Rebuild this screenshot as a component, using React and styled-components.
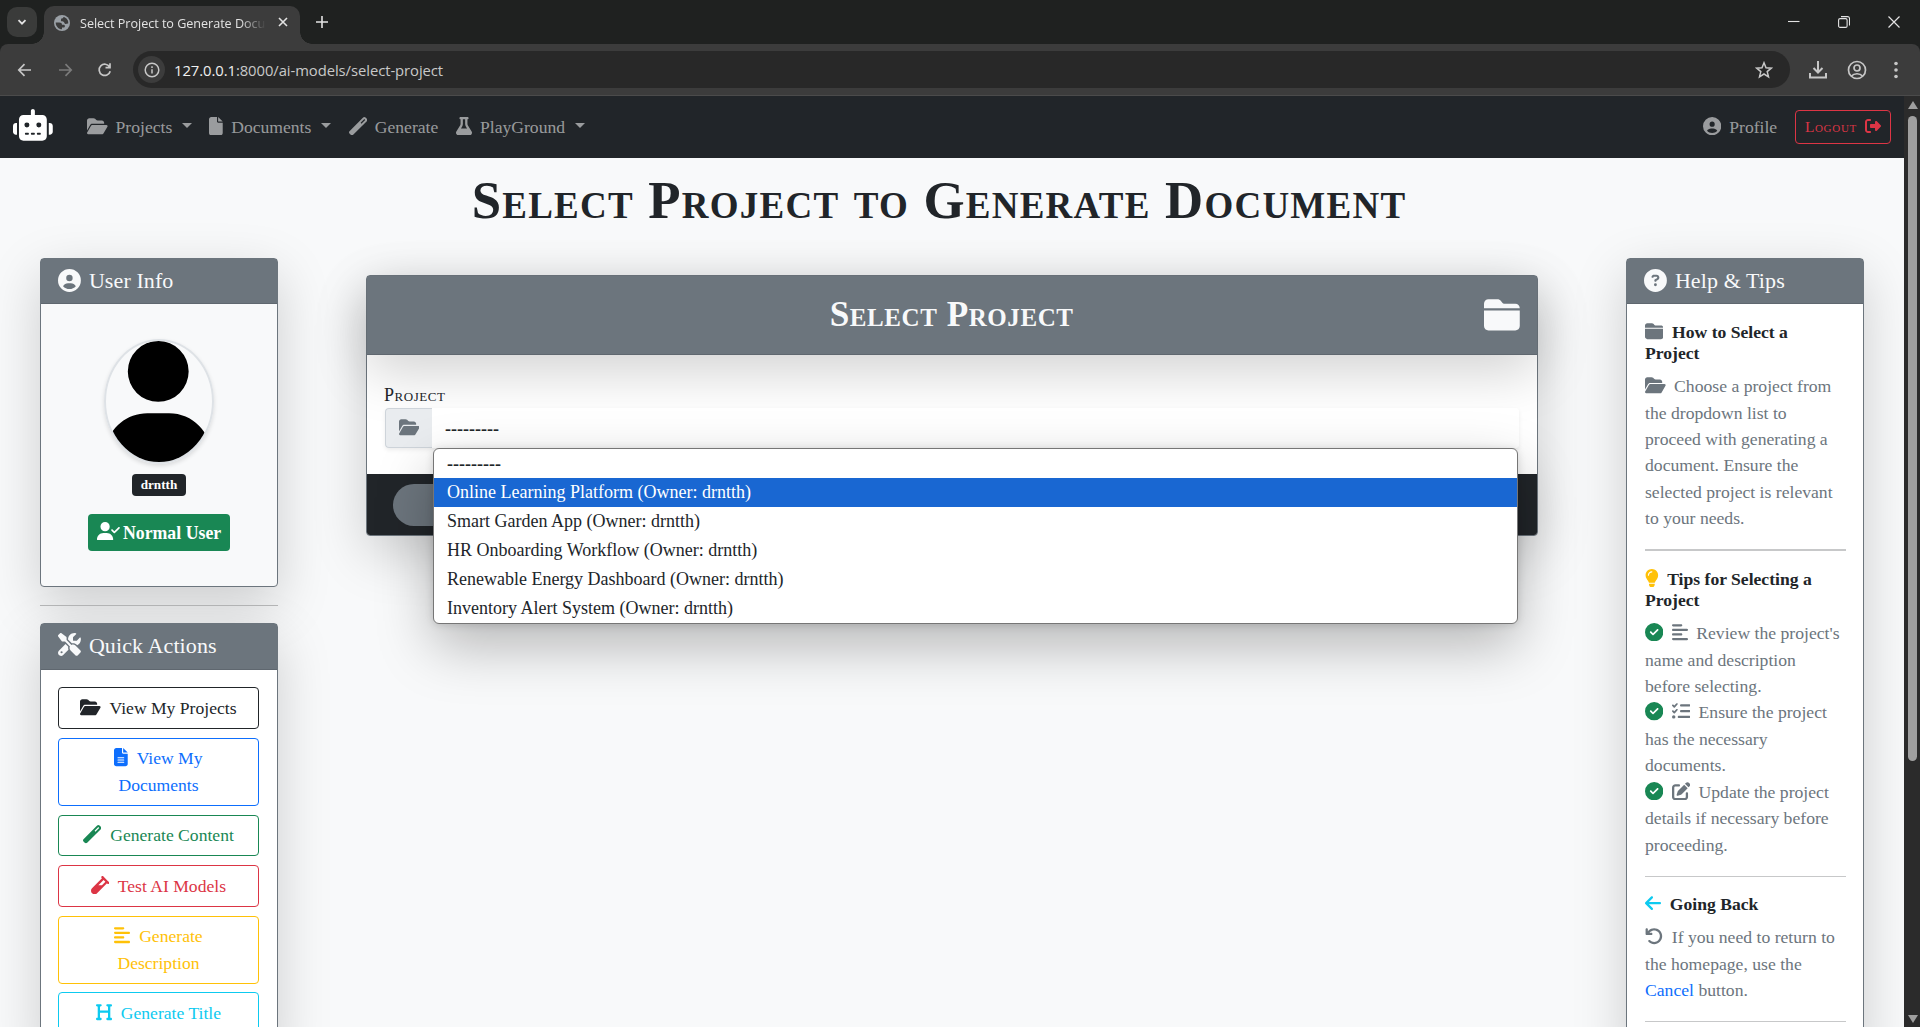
import React from 'react';
import styled, { createGlobalStyle, css } from 'styled-components';
import * as fa from 'react-icons/fa6';

/* Font Awesome glyphs keep their own advance width, in 512ths of the height. */
const glyph = (Icon, units = 512) => styled(Icon)`
  width: ${((units / 512) * 1.04).toFixed(4)}em;
`;
const Robot = glyph(fa.FaRobot, 640);
const FolderOpen = glyph(fa.FaFolderOpen, 576);
const Folder = glyph(fa.FaFolderClosed);
const File = glyph(fa.FaFile, 384);
const Wand = glyph(fa.FaWandMagic);
const Flask = glyph(fa.FaFlask, 448);
const CircleUser = glyph(fa.FaCircleUser);
const Exit = glyph(fa.FaRightFromBracket);
const Tools = glyph(fa.FaScrewdriverWrench);
const FileLines = glyph(fa.FaFileLines, 384);
const Vial = glyph(fa.FaVial);
const AlignLeft = glyph(fa.FaAlignLeft, 448);
const HeadingIcon = glyph(fa.FaHeading, 448);
const Question = glyph(fa.FaCircleQuestion);
const Bulb = glyph(fa.FaLightbulb, 384);
const Checklist = glyph(fa.FaListCheck);
const Edit = glyph(fa.FaPenToSquare);
const ArrowBack = glyph(fa.FaArrowLeft, 448);
const Undo = glyph(fa.FaArrowRotateLeft);
const UserCheck = glyph(fa.FaUserCheck, 640);
const User = glyph(fa.FaUser, 448);
const Check = styled(glyph(fa.FaCircleCheck))`
  color: #198754;
`;

const GlobalStyle = createGlobalStyle`
  *, *::before, *::after { box-sizing: border-box; }
  html { font-size: 17.6px; }
  body {
    margin: 0;
    overflow: hidden;
    background: #f8f9fa;
    color: #212529;
    font-family: "Liberation Serif", "Times New Roman", serif;
    font-size: 1rem;
    line-height: 1.5;
  }
  svg { vertical-align: -0.125em; }
`;

const Window = styled.div`
  display: flex;
  flex-direction: column;
  width: 1920px;
  height: 1027px;
  overflow: hidden;
`;

/* ---------- browser frame ---------- */
const TabStrip = styled.div`
  flex: none;
  display: flex;
  align-items: flex-start;
  height: 44px;
  padding-left: 7px;
  background: #1f2120;
  color: #e3e3e3;
  font-family: "Open Sans", "Noto Sans", sans-serif;
`;
const TabSearch = styled.div`
  display: grid;
  place-items: center;
  width: 30px;
  height: 30px;
  margin-top: 7px;
  border-radius: 10px;
  background: #3a3b3a;
`;
const Tab = styled.div`
  position: relative;
  display: flex;
  align-items: center;
  width: 256px;
  height: 38px;
  margin: 6px 0 0 7px;
  padding: 0 10px;
  border-radius: 10px 10px 0 0;
  background: #3c3c3c;
  &::before, &::after {
    content: '';
    position: absolute;
    bottom: 0;
    width: 12px;
    height: 12px;
  }
  &::before { left: -12px; background: radial-gradient(circle at 0 0, transparent 11.5px, #3c3c3c 12px); }
  &::after { right: -12px; background: radial-gradient(circle at 100% 0, transparent 11.5px, #3c3c3c 12px); }
`;
const Favicon = styled.svg`
  margin-top: -5px;
`;
const TabTitle = styled.div`
  width: 187px;
  margin: -3px 0 0 10px;
  overflow: hidden;
  white-space: nowrap;
  font-size: 12.6px;
  letter-spacing: -0.03px;
  line-height: 20px;
  mask-image: linear-gradient(90deg, #000 160px, transparent 186px);
`;
const TabClose = styled.div`
  display: flex;
  margin: -6px 0 0 11px;
`;
const NewTab = styled.div`
  display: flex;
  margin: 16px 0 0 16px;
`;
const WindowButtons = styled.div`
  display: flex;
  align-items: center;
  gap: 38px;
  margin: 16px 20px 0 auto;
`;
const ToolbarBack = styled.div`
  flex: none;
  background: #1f2120;
`;
const Toolbar = styled.div`
  display: flex;
  align-items: center;
  height: 52px;
  padding: 0 14px 0 17px;
  background: #3c3c3c;
  border-bottom: 1px solid #4b4b4b;
  border-radius: 8px 8px 0 0;
  color: #c7c7c7;
`;
const NavIcons = styled.div`
  display: flex;
  gap: 24px;
  width: 116px;
`;
const Omnibox = styled.div`
  flex: 1;
  display: flex;
  align-items: center;
  height: 37px;
  padding: 0 17px 0 5px;
  border-radius: 19px;
  background: #282828;
`;
const InfoChip = styled.div`
  display: grid;
  place-items: center;
  width: 27px;
  height: 27px;
  border-radius: 50%;
  background: #3c3c3c;
`;
const Url = styled.div`
  flex: 1;
  padding-left: 9px;
  font: 14.8px/20px "Open Sans", "Noto Sans", sans-serif;
  letter-spacing: -0.06px;
  color: #c8c8c8;
  b { font-weight: 400; color: #f0f0f0; }
`;
const ToolIcons = styled.div`
  display: flex;
  align-items: center;
  gap: 19px;
  padding-left: 18px;
`;

/* ---------- page ---------- */
const Viewport = styled.div`
  flex: 1;
  display: flex;
  min-height: 0;
`;
const Page = styled.div`
  flex: 1;
  min-width: 0;
  overflow: hidden;
  background: #f8f9fa;
  svg {
    flex: none;
    height: 1.04em;
  }
`;
const Scrollbar = styled.div`
  flex: none;
  display: flex;
  flex-direction: column;
  align-items: center;
  justify-content: space-between;
  width: 16px;
  padding: 5px 0 4px 1px;
  background: #2b2b2b;
`;
const Thumb = styled.div`
  width: 9px;
  height: 645px;
  margin: 7px 0 auto;
  border-radius: 5px;
  background: #9f9f9f;
`;
const Arrow = styled.div`
  border: 5px solid transparent;
  ${(p) => (p.$up
    ? 'border-top: 0; border-bottom: 8px solid #9f9f9f;'
    : 'border-bottom: 0; border-top: 8px solid #9f9f9f;')}
`;

const Navbar = styled.nav`
  display: flex;
  align-items: center;
  height: 62px;
  padding: 0 13px;
  background: #212529;
  color: rgba(255, 255, 255, 0.55);
`;
const Brand = styled.div`
  display: flex;
  width: 74px;
  margin-top: -4px;
  color: #fff;
  font-size: 30.6px;
`;
const NavLink = styled.div`
  display: flex;
  align-items: center;
  margin-left: ${(p) => (p.$end ? 'auto' : 0)};
  margin-right: 17.7px;
  white-space: nowrap;
  svg { margin: -2px 8px 0 0; }
`;
const Caret = styled.span`
  margin: -3px 0 0 9.5px;
  border: 5px solid transparent;
  border-top-color: currentColor;
  border-bottom: 0;
`;
const Logout = styled.div`
  display: flex;
  align-items: center;
  height: 34px;
  padding: 0 9px;
  border: 1px solid #dc3545;
  border-radius: 4px;
  color: #dc3545;
  font-size: 15.4px;
  font-variant: small-caps;
  letter-spacing: 0.7px;
  svg { margin: -2px 0 0 8px; }
`;
const Heading = styled.h1`
  margin: 11px 0 0 -26px;
  text-align: center;
  font-size: 3rem;
  font-weight: 700;
  font-variant: small-caps;
  letter-spacing: 1.24px;
  line-height: 1.2;
`;
const Columns = styled.div`
  display: flex;
  align-items: flex-start;
  justify-content: space-between;
  padding: 26px 40px 0;
`;
const Side = styled.aside`
  width: 238px;
`;
const shadow = css`box-shadow: 0 1rem 3rem rgba(0, 0, 0, 0.175);`;
const Card = styled.section`
  border: 1px solid #6c757d;
  border-radius: 4px;
  background: ${(p) => p.$bg || '#fff'};
  ${shadow}
`;
const CardHeader = styled.header`
  display: flex;
  align-items: center;
  height: ${(p) => p.$h || 45}px;
  padding: 0 17px ${(p) => (p.$h ? 2 : 0)}px;
  border-bottom: 1px solid #5f676f;
  background: #6c757d;
  color: #f8f9fa;
  font-size: 22px;
  letter-spacing: 0.1px;
  line-height: 26px;
  svg { margin: -2px 8px 0 0; }
`;
const UserBody = styled.div`
  display: flex;
  flex-direction: column;
  align-items: center;
  height: 282px;
  padding-top: 35px;
`;
const Avatar = styled.div`
  display: flex;
  justify-content: center;
  width: 110px;
  height: 125px;
  margin-right: 1px;
  border: 2px solid #dee2e6;
  border-radius: 50%;
  overflow: hidden;
  box-shadow: 0 2px 4px rgba(0, 0, 0, 0.12);
  color: #000;
  font-size: 117px;
`;
const Badge = styled.div`
  margin-top: 10px;
  padding: 0 8.5px;
  border-radius: 4px;
  background: #212529;
  color: #fff;
  font-size: 13.2px;
  font-weight: 700;
  line-height: 22px;
`;
const Role = styled.div`
  display: flex;
  align-items: center;
  height: 37px;
  margin-top: 18px;
  padding: 0 9px;
  border-radius: 4px;
  background: #198754;
  color: #fff;
  font-size: 17.8px;
  font-weight: 700;
  svg { margin: -4px 3px 0 0; }
`;
const Rule = styled.hr`
  margin: 1rem 0;
  border: 0;
  border-top: ${(p) => p.$w || 1}px solid #c7c8c9;
`;
const SideRule = styled(Rule)`
  margin: 18px 0 17px;
  border-color: #b5b6b7;
`;
const Actions = styled.div`
  display: flex;
  flex-direction: column;
  gap: 8.7px;
  padding: 17px 18px 17px 17px;
`;
const Action = styled.div`
  padding: 6.7px 17px;
  border: 1px solid;
  border-radius: 4px;
  color: ${(p) => p.$color};
  text-align: center;
  svg { margin-right: 4.4px; }
`;

const MainCard = styled(Card)`
  width: 1172px;
  height: 261px;
  margin-top: 17px;
`;
const MainHeader = styled.header`
  display: flex;
  align-items: center;
  height: 79px;
  padding: 0 17px;
  border-bottom: 1px solid #5f676f;
  background: #6c757d;
  color: #f8f9fa;
  font-size: 34.4px;
  ${shadow}
`;
const MainTitle = styled.h2`
  flex: 1;
  margin: -1px 0 0 35px;
  text-align: center;
  font-size: 2rem;
  font-variant: small-caps;
  letter-spacing: 0.55px;
  line-height: 1.2;
`;
const Form = styled.div`
  height: 119px;
  padding: 26px 18px 0;
`;
const Label = styled.div`
  height: 27px;
  margin-left: -1px;
  font-size: 18px;
  font-variant: small-caps;
  letter-spacing: 0.55px;
  line-height: 28px;
`;
const InputGroup = styled.div`
  position: relative;
  display: flex;
  height: 40px;
  border-radius: 4px;
  box-shadow: 0 2px 4px rgba(0, 0, 0, 0.075);
`;
const AddOn = styled.div`
  display: grid;
  place-items: center;
  width: 47px;
  padding-bottom: 2px;
  border: 1px solid #ced4da;
  border-right: 0;
  border-radius: 4px 0 0 4px;
  background: #e9ecef;
  color: #6c757d;
`;
const Select = styled.div`
  flex: 1;
  padding: 8px 13px;
  border-radius: 0 4px 4px 0;
  background: #fff;
  font-size: 18px;
  font-weight: 700;
  line-height: 26px;
`;
const Menu = styled.ul`
  position: absolute;
  z-index: 2;
  top: 40px;
  left: 48px;
  width: 1085px;
  margin: 0;
  padding: 0;
  border: 1px solid #767676;
  border-radius: 6px;
  background: #fff;
  box-shadow: 0 22px 56px rgba(0, 0, 0, 0.27), 0 1px 8px rgba(0, 0, 0, 0.14);
  list-style: none;
`;
const Option = styled.li`
  height: 29px;
  padding: 0 13px;
  font-size: 18px;
  line-height: ${(p) => (p.$blank ? 30 : 29)}px;
  font-weight: ${(p) => (p.$blank ? 700 : 400)};
  background: ${(p) => (p.$active ? '#1967d2' : 'transparent')};
  color: ${(p) => (p.$active ? '#fff' : '#212529')};
`;
const Footer = styled.footer`
  height: 61px;
  padding: 10px 26px;
  border-radius: 0 0 3px 3px;
  background: #212529;
`;
const Pill = styled.div`
  width: 180px;
  height: 42px;
  border-radius: 21px;
  background: #6c757d;
`;

const HelpBody = styled.div`
  padding: 1rem 17px 1rem 18px;
`;
const HelpTitle = styled.h6`
  margin: 0 0 0.5rem;
  font-size: 1rem;
  font-weight: 700;
  line-height: 1.2;
  white-space: pre-line;
  svg { margin-right: 4.4px; color: ${(p) => p.$icon}; }
`;
const Text = styled.p`
  margin: 0;
  color: #6c757d;
  font-size: 17.65px;
  line-height: 26.45px;
  white-space: pre-line;
  svg { margin-right: 4px; }
  a { color: #0d6efd; }
`;

const actions = [
  [FolderOpen, 'View My Projects', '#212529'],
  [FileLines, 'View My Documents', '#0d6efd'],
  [Wand, 'Generate Content', '#198754'],
  [Vial, 'Test AI Models', '#dc3545'],
  [AlignLeft, 'Generate Description', '#ffc107'],
  [HeadingIcon, 'Generate Title', '#0dcaf0'],
];
const projects = [
  'Online Learning Platform', 'Smart Garden App', 'HR Onboarding Workflow',
  'Renewable Energy Dashboard', 'Inventory Alert System',
];
const howTo = 'Choose a project from\nthe dropdown list to\nproceed with generating a\ndocument. Ensure the\nselected project is relevant\nto your needs.';
const tips = [
  [AlignLeft, "Review the project's\nname and description\nbefore selecting."],
  [Checklist, 'Ensure the project\nhas the necessary\ndocuments.'],
  [Edit, 'Update the project\ndetails if necessary before\nproceeding.'],
];

const Line = ({ w = 16, h = w, box = `0 0 ${w} ${h}`, sw = 1.6, children }) => (
  <svg width={w} height={h} viewBox={box} fill="none" stroke="currentColor" strokeWidth={sw}>{children}</svg>
);

function BrowserFrame() {
  return (
    <>
      <TabStrip>
        <TabSearch><Line w={10} sw={1.8}><path d="M1.5 3.2 5 6.7l3.5-3.5" /></Line></TabSearch>
        <Tab>
          <Favicon width="16" height="16" viewBox="0 0 16 16">
            <circle cx="8" cy="8" r="8" fill="#9aa0a6" />
            <path d="M1.700 7.500h3.600c1.700 0 2.700.9 2.700 2.300h1.500c.9 0 1.400.6 1.400 1.400 0 .9-.6 1.400-1.500 1.400H8v1.700c-3.500 0-6.300-2.900-6.300-6.800zM9.500 1.900c-.3 1-1.200 1.500-2.200 1.600-.6 1 .1 2-.5 2.600.9.6 2.200.2 3 .9.700.6.5 1.700 1.500 1.900 1 .2 1.900-.6 2.900-.4.500-3.100-1.500-5.900-4.700-6.600z" fill="#3c3c3c" />
          </Favicon>
          <TabTitle>Select Project to Generate Document</TabTitle>
          <TabClose><Line w={10}><path d="m1 1 8 8M9 1 1 9" /></Line></TabClose>
        </Tab>
        <NewTab><Line w={12}><path d="M6 0v12M0 6h12" /></Line></NewTab>
        <WindowButtons>
          <Line w={12} sw={1.1}><path d="M0 5.500h11.500" /></Line>
          <Line w={12} sw={1.1}><rect x=".6" y="2.600" width="8.500" height="8.800" rx="1.500" /><path d="M3 .6h6.500q2 0 2 2V9.500" /></Line>
          <Line w={12} sw={1.2}><path d="m.5.5 11 11M11.500.5l-11 11" /></Line>
        </WindowButtons>
      </TabStrip>
      <ToolbarBack>
        <Toolbar>
          <NavIcons>
            <Line sw={1.7}><path d="M14 8H2M7.500 2.200 1.800 8l5.700 5.800" /></Line>
            <Line sw={1.7}><g opacity=".45"><path d="M2 8h12M8.500 2.200 14.200 8l-5.700 5.800" /></g></Line>
            <Line sw={1.7}><path d="M12.600 5A5.600 5.600 0 1 0 13.200 9.200M13 1.200v4.500H8.500" /></Line>
          </NavIcons>
          <Omnibox>
            <InfoChip><Line w={16} sw={1.5}><circle cx="8" cy="8" r="6.800" /><path d="M8 7.200v4.300M8 4.300V6" /></Line></InfoChip>
            <Url><b>127.0.0.1</b>:8000/ai-models/select-project</Url>
            <Line w={18} sw={1.5}><path d="m9 1.800 2 5 5.300.4-4.100 3.400 1.300 5.200L9 13l-4.500 2.800 1.300-5.200L1.700 7.200 7 6.800z" /></Line>
          </Omnibox>
          <ToolIcons>
            <Line w={20} sw={2}><path d="M10 1v11.500M5.500 8l4.500 4.500L14.500 8M2 13v4.500h16V13" /></Line>
            <Line w={20} sw={1.700}><circle cx="10" cy="10" r="8.500" /><circle cx="10" cy="8" r="3" /><path d="M4.500 16c2.500-3 8.500-3 11 0" /></Line>
            <svg width="20" height="18" viewBox="0 0 20 18" fill="currentColor"><circle cx="10" cy="2.500" r="1.800" /><circle cx="10" cy="9" r="1.800" /><circle cx="10" cy="15.500" r="1.800" /></svg>
          </ToolIcons>
        </Toolbar>
      </ToolbarBack>
    </>
  );
}

export default function App() {
  return (
    <Window>
      <GlobalStyle />
      <BrowserFrame />
      <Viewport>
        <Page>
          <Navbar>
            <Brand><Robot /></Brand>
            <NavLink><FolderOpen />Projects<Caret /></NavLink>
            <NavLink><File />Documents<Caret /></NavLink>
            <NavLink><Wand />Generate</NavLink>
            <NavLink><Flask />PlayGround<Caret /></NavLink>
            <NavLink $end><CircleUser />Profile</NavLink>
            <Logout>Logout<Exit /></Logout>
          </Navbar>
          <Heading>Select Project to Generate Document</Heading>
          <Columns>
            <Side>
              <Card $bg="#f8f9fa">
                <CardHeader><CircleUser />User Info</CardHeader>
                <UserBody>
                  <Avatar><User /></Avatar>
                  <Badge>drntth</Badge>
                  <Role><UserCheck />Normal User</Role>
                </UserBody>
              </Card>
              <SideRule />
              <Card>
                <CardHeader $h={46}><Tools />Quick Actions</CardHeader>
                <Actions>
                  {actions.map(([Icon, label, color]) => (
                    <Action key={label} $color={color}><Icon /> {label}</Action>
                  ))}
                </Actions>
              </Card>
            </Side>
            <MainCard>
              <MainHeader><MainTitle>Select Project</MainTitle><Folder /></MainHeader>
              <Form>
                <Label>Project</Label>
                <InputGroup>
                  <AddOn><FolderOpen /></AddOn>
                  <Select>---------</Select>
                  <Menu>
                    <Option $blank>---------</Option>
                    {projects.map((name, i) => (
                      <Option key={name} $active={i === 0}>{name} (Owner: drntth)</Option>
                    ))}
                  </Menu>
                </InputGroup>
              </Form>
              <Footer><Pill /></Footer>
            </MainCard>
            <Side>
              <Card>
                <CardHeader><Question />Help &amp; Tips</CardHeader>
                <HelpBody>
                  <HelpTitle $icon="#6c757d"><Folder /> {'How to Select a\nProject'}</HelpTitle>
                  <Text><FolderOpen /> {howTo}</Text>
                  <Rule $w={2} />
                  <HelpTitle $icon="#ffc107"><Bulb /> {'Tips for Selecting a\nProject'}</HelpTitle>
                  {tips.map(([Icon, tip]) => (
                    <Text key={tip}><Check /> <Icon /> {tip}</Text>
                  ))}
                  <Rule />
                  <HelpTitle $icon="#0dcaf0"><ArrowBack /> Going Back</HelpTitle>
                  <Text><Undo /> {'If you need to return to\nthe homepage, use the\n'}<a>Cancel</a> button.</Text>
                  <Rule />
                </HelpBody>
              </Card>
            </Side>
          </Columns>
        </Page>
        <Scrollbar><Arrow $up /><Thumb /><Arrow /></Scrollbar>
      </Viewport>
    </Window>
  );
}
